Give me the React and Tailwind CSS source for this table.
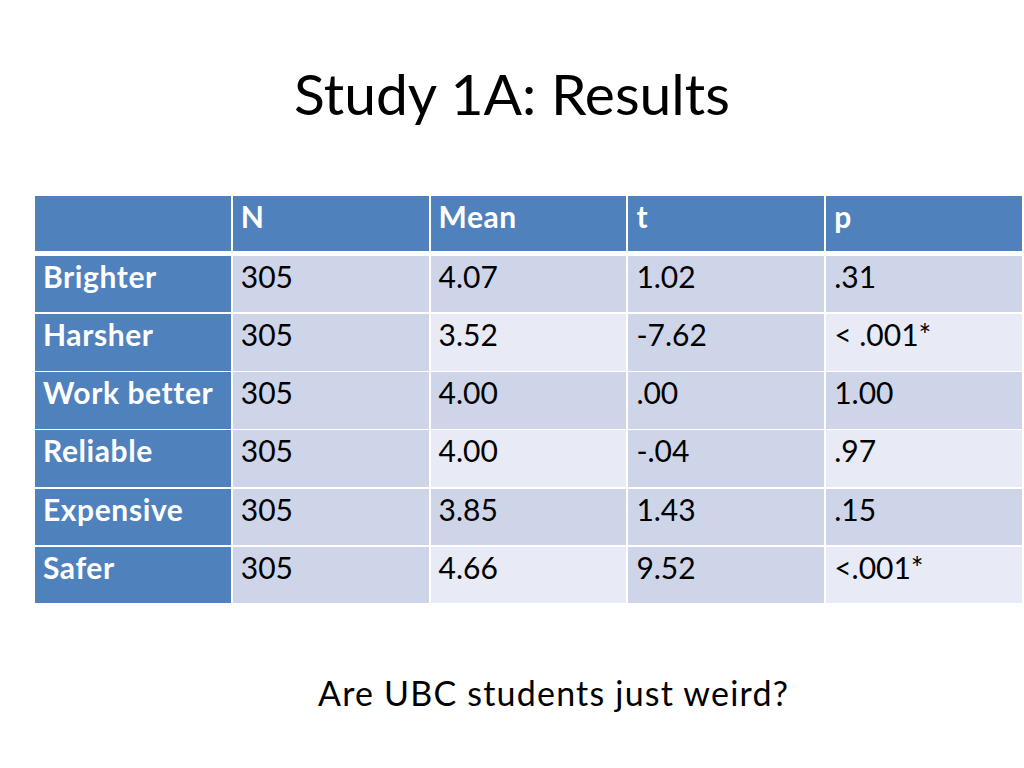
import React from "react";

const rows = [
  ["Brighter", "305", "4.07", "1.02", ".31"],
  ["Harsher", "305", "3.52", "-7.62", "< .001*"],
  ["Work better", "305", "4.00", ".00", "1.00"],
  ["Reliable", "305", "4.00", "-.04", ".97"],
  ["Expensive", "305", "3.85", "1.43", ".15"],
  ["Safer", "305", "4.66", "9.52", "<.001*"],
];

const DARK = "bg-[#CFD5E9]";
const LIGHT = "bg-[#E8EBF5]";

export default function App() {
  return (
    <div className="w-[1024px] h-[768px] bg-white font-['Lato','Carlito',sans-serif] text-black overflow-hidden">
      <div className="pt-[59px] text-center text-[57px] leading-[1.2]">Study 1A: Results</div>
      <div className="ml-[35px] mt-[69px] w-[987px] flex flex-col">
        <div className="grid grid-cols-5 gap-x-[2px] h-[55px] mb-[4.5px]">
          {["", "N", "Mean", "t", "p"].map((h, i) => (
            <div key={i} className="bg-[#4F81BD] text-white font-bold text-[30px] tracking-[0.5px] leading-[1.2] pt-[2px] pl-[8px]">
              {h}
            </div>
          ))}
        </div>
        <div className="flex flex-col gap-y-[1.6px]">
          {rows.map((r, ri) => (
            <div key={ri} className="grid grid-cols-5 gap-x-[2px] h-[56.6px]">
              {r.map((c, ci) => {
                let cls;
                if (ci === 0) cls = "bg-[#4F81BD] text-white font-bold tracking-[0.6px]";
                else if (ri % 2 === 0) cls = DARK;
                else cls = ci % 2 === 1 ? DARK : LIGHT;
                return (
                  <div key={ci} className={`${cls} text-[30px] leading-[1.2] pt-[2px] pl-[8px] whitespace-nowrap`}>
                    {c}
                  </div>
                );
              })}
            </div>
          ))}
        </div>
      </div>
      <div className="mt-[70px] ml-[318px] text-[34px] tracking-[1.2px] leading-[1.2] whitespace-nowrap">Are UBC students just weird?</div>
    </div>
  );
}
